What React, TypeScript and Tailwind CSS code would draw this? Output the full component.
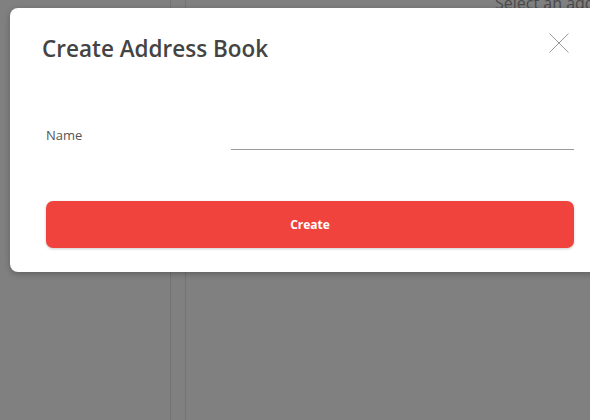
import React from "react";

export default function App() {
  return (
    <div
      className="relative w-[590px] h-[420px] overflow-hidden bg-[#808080]"
      style={{ fontFamily: '"Open Sans", "Noto Sans", sans-serif' }}
    >
      {/* background page (dimmed) */}
      <div className="flex h-full">
        <div className="w-[171px] shrink-0 h-full border-r border-[#737373]" />
        <div className="w-[15px] shrink-0 h-full border-r border-[#737373]" />
        <div className="flex-1 min-w-0 h-full overflow-hidden">
          <div className="mt-[-9px] pl-[309px] whitespace-nowrap text-[16px] text-[#4a4a4a]">
            Select an address book
          </div>
        </div>
      </div>

      {/* modal */}
      <div className="absolute left-[10px] top-[8px] w-[600px] h-[264px] rounded-[8px] bg-white shadow-[0_2px_6px_rgba(0,0,0,0.25)]">
        <div className="flex items-start justify-between pl-[32px] pr-[41px] pt-[25px]">
          <h2 className="mt-[1px] text-[22.5px] leading-[30px] font-semibold text-[#444444]">
            Create Address Book
          </h2>
          <button className="w-[20px] h-[20px] text-[#9a9a9a]">
            <svg width="20" height="20" viewBox="0 0 20 20" fill="none" stroke="currentColor" strokeWidth="1">
              <path d="M0.5 0.5L19.5 19.5M19.5 0.5L0.5 19.5" />
            </svg>
          </button>
        </div>

        <div className="flex items-end pl-[36px] pr-[36px] mt-[56px]">
          <label className="w-[185px] shrink-0 text-[13px] leading-[16px] text-[#555555] mb-[7px]">Name</label>
          <div className="flex-1 h-[30px] border-b border-[#9a9a9a]" />
        </div>

        <div className="pl-[36px] pr-[36px] mt-[51px]">
          <button className="w-full h-[47px] rounded-[7px] bg-[#f0433d] text-white text-[12px] font-bold shadow-[0_1px_3px_rgba(0,0,0,0.2)]">
            Create
          </button>
        </div>
      </div>
    </div>
  );
}
